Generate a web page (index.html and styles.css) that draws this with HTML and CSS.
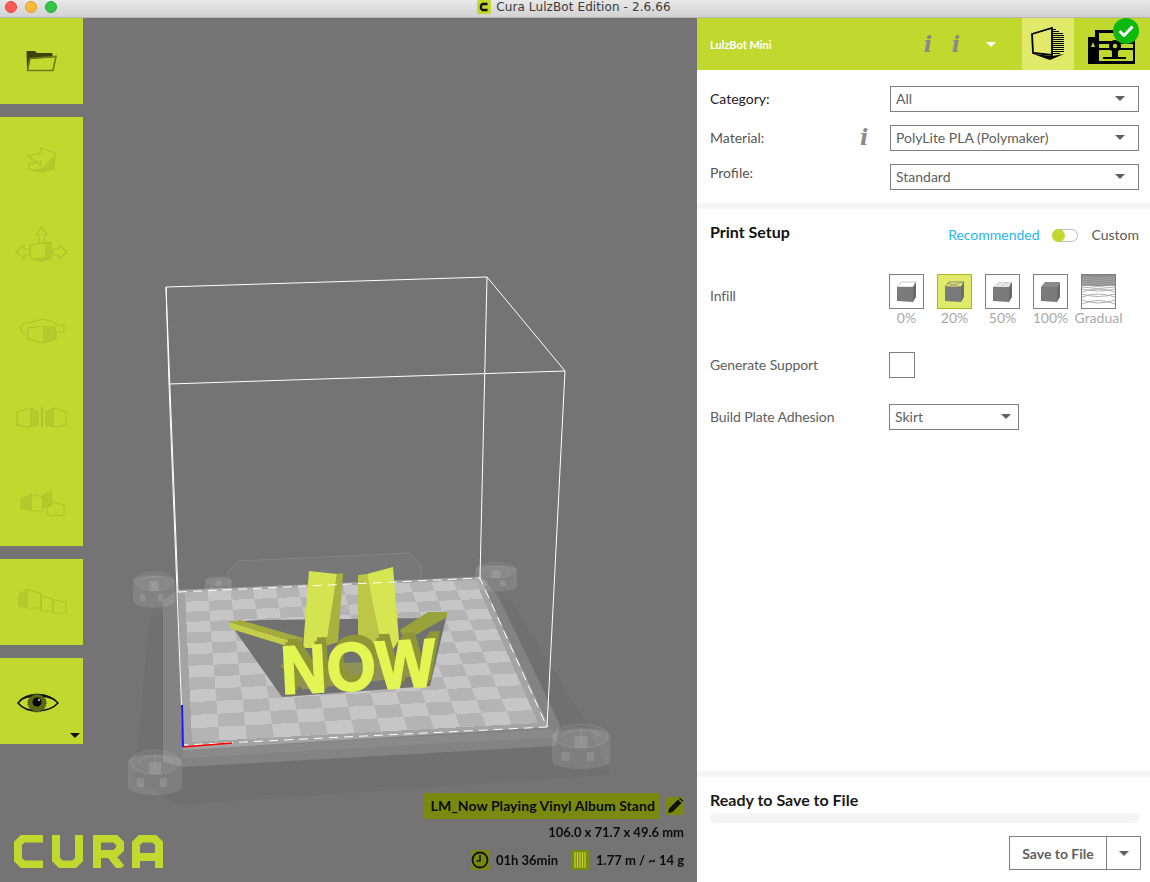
FILE: index.html
```html
<!DOCTYPE html>
<html lang="en">
<head>
<meta charset="utf-8">
<title>Cura LulzBot Edition - 2.6.66</title>
<link rel="stylesheet" href="styles.css">
</head>
<body>
<div class="window">
  <header class="titlebar">
    <div class="lights"><span class="light red"></span><span class="light yellow"></span><span class="light green"></span></div>
    <div class="title"><span class="app-badge"><svg viewBox="0 0 14 14" width="14" height="14"><rect width="14" height="14" rx="2" fill="#c1d82f"/><path d="M10.5 4H5.500L4 5.500V8.500L5.500 10H10.500" fill="none" stroke="#111" stroke-width="2.400"/></svg></span>Cura LulzBot Edition - 2.6.66</div>
  </header>
  <div class="main">
    <section class="viewport">
      <svg class="scene" viewBox="0 0 697 882" width="697" height="882">
        <defs>
          <g id="mount">
            <path d="M0 14C0 4 54 4 54 14V38C54 50 0 50 0 38Z" fill="#fff" fill-opacity=".1"/>
            <ellipse cx="27" cy="14" rx="25" ry="12" fill="#fff" fill-opacity=".05" stroke="#fff" stroke-opacity=".1"/>
            <path d="M10 14C16 6 38 6 44 14M27 6V22" fill="none" stroke="#fff" stroke-opacity=".12"/>
            <path d="M21 14h12v12h-12zM9 30h7v9h-7zM32 30h7v9h-7z" fill="#fff" fill-opacity=".12"/>
          </g>
        </defs>
        <path d="M150 615L510 600L590 730L610 775L180 805L135 780Z" fill="#707070"/>
        <path d="M228 572L238 561L410 553L422 566L420 590L230 598Z" fill="#787878" stroke="#848484"/>
        <path d="M163 600L178 590L482 576L500 600L560 725L556 746L183 767L163 762Z" fill="#838383"/>
        <path d="M183 750L552 729L556 737L183 758Z" fill="#8a8a8a"/>
        <path d="M178 590L480 577L549 727L183 750Z" fill="#a4a4a4"/>
        <use href="#mount" transform="translate(128 748)"/>
        <use href="#mount" transform="translate(552 722) scale(1.080 1)"/>
        <use href="#mount" transform="translate(133 570) scale(.78 .8)"/>
        <use href="#mount" transform="translate(475 561) scale(.78 .65)"/>
        <use href="#mount" transform="translate(205 575) scale(.5 .42)"/>
      </svg>
      <div class="checker"></div>
      <svg class="scene" viewBox="0 0 697 882" width="697" height="882">
        <path d="M229 622L262 620L432 618L447 614L430 686L282 697Z" fill="#717171"/>
        <path d="M303 690L280 665L435 660L425 675L300 690Z" fill="#a9b340" opacity=".5"/>
        <path d="M229 622L240 620L303 638L301 644Z" fill="#a3ab3d"/>
        <path d="M229 622L301 644L300 650L231 629Z" fill="#c3ce48"/>
        <path d="M400 630L428 612L447 612L447 617L405 641Z" fill="#9aa33a"/>
        <path d="M309 571L337 574L326 648L303 648Z" fill="#d4e350"/>
        <path d="M337 574L343 573L338 642L326 646Z" fill="#a9b23e"/>
        <path d="M358 575L367 574L386 650L358 648Z" fill="#bcc748"/>
        <path d="M367 574L393 567L399 640L385 662Z" fill="#d6e552"/>
        <g class="model-text" transform="translate(282 694) rotate(-3)">
          <text class="now-side" x="5" y="-7" textLength="155" lengthAdjust="spacingAndGlyphs">NOW</text>
          <text class="now-side" x="2.500" y="-3.500" textLength="155" lengthAdjust="spacingAndGlyphs">NOW</text>
          <text class="now-front" x="0" y="0" textLength="155" lengthAdjust="spacingAndGlyphs">NOW</text>
        </g>
        <g fill="none" stroke="#fff" stroke-width="1">
          <path d="M166 287L487 277L565 371L169 384ZM166 287L178 592M169 384L183 745M487 277L480 578M565 371L547 727"/>
          <path d="M178 592L480 578L547 727L183 745" stroke-dasharray="9 6"/>
        </g>
        <path d="M182 705L183 747" stroke="#1a1aff" stroke-width="2"/>
        <path d="M183 747L232 743" stroke="#f00" stroke-width="1.500"/>
      </svg>

      <nav class="toolbar">
        <div class="tool-group">
          <div class="tool"><svg viewBox="0 0 31 22" width="31" height="22"><path d="M1 1.500H9L11 3.500H26V7L4 8.500L1.500 20Z" fill="#3b420c" stroke="#3b420c"/><path d="M4 8.500L30 6.500L27 20.500H1.500Z" fill="none" stroke="#6f7c18" stroke-width="1.600"/></svg></div>
        </div>
        <div class="tool-group">
          <div class="tool"><svg class="dim" viewBox="0 0 30 26" width="30" height="26"><path d="M1 9L14 6V1L28 6L27 22L14 24L2 22V17L14 14V19L1 9Z"/><path d="M27 9V22L14 22Z" class="solid"/><path d="M3 23L14 21L26 23L15 26Z" class="solid"/></svg></div>
          <div class="tool"><svg class="dim" viewBox="0 0 53 39" width="53" height="39"><path d="M26.500 1L32 9H29V17H24V9H21Z"/><path d="M1 26L9 19V23H15V29H9V33Z"/><path d="M52 26L44 19V23H38V29H44V33Z"/><path d="M15 19L36 16V32L27 35L15 32Z"/><path d="M30 17L36 16V32L30 34Z" class="solid"/><path d="M16 33L27 31L36 33L26 36Z" class="solid"/></svg></div>
          <div class="tool"><svg class="dim" viewBox="0 0 46 26" width="46" height="26"><path d="M8 17C-3 12 2 5 9 5L24 1L35 4L37 7H45V14H37V21L24 25L9 21V10L24 8L37 10"/><path d="M24 9L37 10V21L24 25Z" class="solid"/></svg></div>
          <div class="tool"><svg class="dim" viewBox="0 0 51 21" width="51" height="21"><path d="M1 5L14 1L22 5V18L12 20L1 18Z"/><path d="M14 2L22 5V18L14 19Z" class="solid"/><path d="M26 0V20" stroke-width="2"/><path d="M30 5L38 1L50 5V18L40 20L30 18Z"/><path d="M30 5L38 2V19L30 18Z" class="solid"/></svg></div>
          <div class="tool"><svg class="dim" viewBox="0 0 46 27" width="46" height="27"><path d="M1 8L12 4V21L1 19Z" class="solid"/><path d="M12 4L24 7V21L12 21Z"/><path d="M23 4L33 1V16L23 19Z" class="solid"/><path d="M28 17L33 12L45 15V25L33 26L28 24Z"/></svg></div>
        </div>
        <div class="tool-group">
          <div class="tool"><svg class="dim" viewBox="0 0 50 27" width="50" height="27"><path d="M1 6L10 1V20L1 19Z" class="solid"/><path d="M10 1L24 6V20L10 20Z"/><path d="M24 8L36 11V23L24 23Z"/><path d="M36 12L49 14V25H36Z"/></svg></div>
        </div>
        <div class="tool-group eye-group">
          <div class="tool"><svg viewBox="0 0 42 22" width="42" height="22"><path d="M1 11C9 1 31 0 41 11C32 21 10 22 1 11Z" fill="none" stroke="#111" stroke-width="1.500"/><path d="M1 10C9 -1 32 -1 41 11C32 3 10 3 1 10Z" fill="#111"/><circle cx="20" cy="11" r="9" fill="#5d6a10" stroke="#222" stroke-dasharray="1 1"/><circle cx="20" cy="10" r="4.500" fill="#050505"/><circle cx="22" cy="8" r="1" fill="#ddd"/></svg></div>
          <span class="eye-caret"></span>
        </div>
      </nav>

      <svg class="logo" role="img" aria-label="Cura" viewBox="0 0 149 33" width="149" height="33">
        <path d="M29 3.500H9L4 8.500V24.500L9 29.500H29M42 0V24.500L47 29.500H60L65 24.500V0M83 33V3.500H101L106 8.500V14L101 19H83M96 19L107 33M122 33V8.500L127 3.500H140L145 8.500V33M122 22H145" fill="none" stroke="#c1d82f" stroke-width="8"/>
      </svg>

      <div class="job-specs">
        <div class="job-name-row">
          <span class="job-name">LM_Now Playing Vinyl Album Stand</span>
          <span class="pencil"><svg viewBox="0 0 18 18" width="18" height="18"><path d="M2 16L3 11.500L12 2.500L15.500 6L6.500 15ZM13 1.500L14 .5L17.500 4L16.500 5Z" fill="#111"/></svg></span>
        </div>
        <div class="job-size">106.0 x 71.7 x 49.6 mm</div>
        <div class="job-time">
          <span class="spec-icon"><svg viewBox="0 0 18 20" width="18" height="20"><circle cx="9" cy="10" r="7.500" fill="none" stroke="#111" stroke-width="1.800"/><path d="M9 5V11H5.500" fill="none" stroke="#111" stroke-width="1.500"/></svg></span>
          <span>01h 36min</span>
          <span class="spec-icon spool"><svg viewBox="0 0 18 20" width="18" height="20"><path d="M4 2V18M6.500 2V18M9 2V18M11.500 2V18M14 2V18" stroke="#c7d531" stroke-width="1.200"/></svg></span>
          <span>1.77 m / ~ 14 g</span>
        </div>
      </div>
    </section>

    <aside class="sidebar">
      <div class="machine-bar">
        <span class="machine-name">LulzBot Mini</span>
        <span class="info-i header-i">i</span>
        <span class="info-i header-i">i</span>
        <span class="white-caret"></span>
        <div class="mode-tab active"><svg viewBox="0 0 36 34" width="36" height="34"><path d="M2 7L22 1V28L3 26Z" fill="none" stroke="#000" stroke-width="1.800"/><path d="M22 2.500H26M22 4.500H29M22 6.500H33M22 8.500H34M22 10.500H34M22 12.500H34M22 14.500H34M22 16.500H34M22 18.500H34M22 20.500H34M22 22.500H34M22 24.500H34M22 26.500H30" stroke="#000" stroke-width="1.100"/><path d="M3 27L22 29L34 27L20 33Z" fill="#000"/></svg></div>
        <div class="mode-tab monitor-tab"><svg class="printer" viewBox="0 0 48 36" width="48" height="36"><path d="M7 1H42V8H47V35H0V8H7Z" fill="#000"/><path d="M11 4H34V12H11ZM11 15H45V19H11ZM11 21H45V32H11Z" fill="#c1d82f"/><path d="M3 18L5 13L7 18Z" fill="#c1d82f"/><circle cx="27" cy="17" r="6" fill="#000"/><circle cx="27" cy="17" r="2.200" fill="#c1d82f"/><path d="M24 21H30V28H24ZM15 28H38V30H15Z" fill="#000"/></svg></div>
        <span class="status-badge"><svg viewBox="0 0 16 12" width="16" height="12"><path d="M1.500 6L6 10.500L14.500 1.500" fill="none" stroke="#fff" stroke-width="3"/></svg></span>
      </div>

      <div class="material-section">
        <div class="field-row">
          <span class="field-label dark">Category:</span>
          <div class="select wide"><span>All</span><i class="caret"></i></div>
        </div>
        <div class="field-row">
          <span class="field-label">Material:</span>
          <span class="info-i material-i">i</span>
          <div class="select wide"><span>PolyLite PLA (Polymaker)</span><i class="caret"></i></div>
        </div>
        <div class="field-row">
          <span class="field-label raised">Profile:</span>
          <div class="select wide"><span>Standard</span><i class="caret"></i></div>
        </div>
      </div>

      <div class="setup-section">
        <div class="setup-head">
          <h2 class="setup-title">Print Setup</h2>
          <div class="mode-switch">
            <span class="recommended">Recommended</span>
            <span class="toggle"><span class="knob"></span></span>
            <span class="custom">Custom</span>
          </div>
        </div>
        <div class="infill-row">
          <span class="setup-label infill-label">Infill</span>
          <div class="infill-options">
            <div class="infill-opt"><span class="infill-box"><svg viewBox="0 0 33 33" width="33" height="33"><path d="M7 12L11 7H26L23 12Z" fill="#fff" stroke="#ccc"/><path d="M7 12H23V27L7 26Z" fill="#7a7a7a"/><path d="M23 12L26 7V22L23 27Z" fill="#6b6b6b"/></svg></span><span class="infill-text">0%</span></div>
            <div class="infill-opt"><span class="infill-box selected"><svg viewBox="0 0 33 33" width="33" height="33"><path d="M7 12L11 7H26L23 12Z" fill="#dfe67c" stroke="#8f8f6a"/><path d="M9 8L23 12M25 7L8 12" stroke="#8f8f6a" stroke-width=".7"/><path d="M7 12H23V27L7 26Z" fill="#7a7a7a"/><path d="M23 12L26 7V22L23 27Z" fill="#6b6b6b"/></svg></span><span class="infill-text">20%</span></div>
            <div class="infill-opt"><span class="infill-box"><svg viewBox="0 0 33 33" width="33" height="33"><path d="M7 12L11 7H26L23 12Z" fill="#ccc"/><path d="M8 10L23 12M10 8L25 10M12 7L7 12M18 7L12 12M24 7L18 12" stroke="#fff" stroke-width=".8"/><path d="M7 12H23V27L7 26Z" fill="#7a7a7a"/><path d="M23 12L26 7V22L23 27Z" fill="#6b6b6b"/></svg></span><span class="infill-text">50%</span></div>
            <div class="infill-opt"><span class="infill-box"><svg viewBox="0 0 33 33" width="33" height="33"><path d="M7 12L11 7H26L23 12Z" fill="#8a8a8a"/><path d="M7 12H23V27L7 26Z" fill="#7a7a7a"/><path d="M23 12L26 7V22L23 27Z" fill="#6b6b6b"/></svg></span><span class="infill-text">100%</span></div>
            <div class="infill-opt"><span class="infill-box"><svg viewBox="0 0 33 33" width="33" height="33"><rect width="33" height="33" fill="#fff"/><rect width="33" height="11" fill="#8d8d8d"/><path d="M0 2Q16 5 33 2M0 4Q16 7 33 4M0 6Q16 9 33 6M0 8Q16 11 33 8M0 10Q16 13 33 10M0 12Q16 15 33 12M0 17Q16 11 33 17M0 14Q16 18 33 14M0 22Q16 16 33 22M0 19Q16 24 33 19M0 29Q16 22 33 29M0 25Q16 31 33 25" fill="none" stroke="#a8a8a8" stroke-width=".9"/></svg></span><span class="infill-text">Gradual</span></div>
          </div>
        </div>
        <div class="support-row">
          <span class="setup-label">Generate Support</span>
          <span class="checkbox"></span>
        </div>
        <div class="adhesion-row">
          <span class="setup-label">Build Plate Adhesion</span>
          <div class="select narrow"><span>Skirt</span><i class="caret"></i></div>
        </div>
      </div>

      <div class="save-section">
        <div class="save-title">Ready to Save to File</div>
        <div class="progress"></div>
        <div class="save-actions">
          <div class="save-btn"><span class="save-label">Save to File</span><span class="save-more"><i class="caret"></i></span></div>
        </div>
      </div>
    </aside>
  </div>
</div>
</body>
</html>
```
FILE: styles.css
```css
* { box-sizing: border-box; }
html, body { margin: 0; padding: 0; background: #fff; }
body { font-family: "Lato", "Open Sans", sans-serif; }

.window { width: 1150px; height: 882px; display: flex; flex-direction: column; overflow: hidden; }

/* title bar */
.titlebar {
  height: 18px; flex: none; position: relative;
  background: linear-gradient(#e8e8e8, #d2d2d2);
  border-bottom: 1px solid #b4b4b4;
  display: flex; align-items: center; justify-content: center;
}
.lights { position: absolute; left: 5px; top: 1px; display: flex; gap: 8px; }
.light { width: 12px; height: 12px; border-radius: 50%; }
.red { background: #fc5b57; border: 1px solid #e2443f; }
.yellow { background: #fdb93b; border: 1px solid #dd9d2c; }
.green { background: #33c748; border: 1px solid #25a938; }
.title {
  font-family: "DejaVu Sans", sans-serif; font-size: 12px; letter-spacing: .1px; color: #3a3a3a;
  display: flex; align-items: center; gap: 5px; margin-left: -2px; margin-top: -3px;
}
.app-badge { display: flex; }

.main { flex: 1; display: flex; min-height: 0; }

/* viewport */
.viewport { width: 697px; flex: none; background: #747474; position: relative; overflow: hidden; }
.scene { position: absolute; left: 0; top: -18px; }
.checker {
  position: absolute; left: 0; top: -18px; width: 1000px; height: 1000px;
  transform-origin: 0 0;
  transform: matrix3d(.302729, .003543, 0, .0000268, -.025012, .026287, 0, -.000166729, 0, 0, 1, 0, 185, 592, 0, 1);
  background: repeating-conic-gradient(#c6c6c6 0 25%, #b4b4b4 0 50%) 0 0 / 153.8px 153.8px;
}
.model-text text { font-family: "Liberation Sans", sans-serif; font-weight: 700; font-size: 68px; }
.now-side { fill: #8f9736; stroke: #8f9736; stroke-width: 1.500px; }
.now-front { fill: #e2f553; stroke: #e2f553; stroke-width: 2px; }

.toolbar { position: relative; width: 83px; display: flex; flex-direction: column; gap: 13px; }
.tool-group { background: #c1d82f; position: relative; }
.tool { height: 85.800px; display: flex; align-items: center; justify-content: center; }
.tool:first-child:last-child { height: 86px; }
.dim { fill: none; stroke: #aec32b; stroke-width: 1.100; }
.dim .solid { fill: #aec32b; fill-opacity: .7; stroke: none; }
.eye-group .tool svg { margin-left: -8px; margin-top: 5px; }
.eye-caret {
  position: absolute; right: 3px; bottom: 6px; width: 0; height: 0;
  border-left: 5px solid transparent; border-right: 5px solid transparent; border-top: 5px solid #111;
}

.logo { position: absolute; left: 14px; bottom: 14px; }

.job-specs {
  position: absolute; right: 13px; bottom: 12px;
  display: flex; flex-direction: column; align-items: flex-end;
  color: #0c0c0c; font-size: 13px; font-weight: 700;
}
.job-name-row { display: flex; align-items: center; gap: 7px; }
.job-name { background: #7a8a10; height: 26px; line-height: 26px; padding: 0 4px 0 8px; font-size: 14px; letter-spacing: .06px; white-space: nowrap; }
.pencil { background: #7a8a10; width: 18px; height: 18px; display: flex; }
.job-size { margin-top: 3px; height: 20px; line-height: 20px; }
.job-time { margin-top: 8px; height: 20px; display: flex; align-items: center; gap: 7px; }
.spec-icon { display: flex; background: #7a8a10; width: 18px; height: 20px; }
.spool { margin-left: 6px; }

/* sidebar */
.sidebar { width: 453px; flex: none; background: #fff; display: flex; flex-direction: column; color: #404040; font-size: 14px; }
.machine-bar { height: 52px; flex: none; background: #c1d82f; position: relative; display: flex; align-items: stretch; padding-left: 13px; }
.machine-name { color: #fff; font-size: 11px; font-weight: 700; align-self: center; width: 204px; }
.info-i { font-family: "DejaVu Serif", serif; font-weight: 700; font-style: italic; font-size: 22px; color: #8a8a8a; line-height: 1; }
.header-i { align-self: center; width: 28px; text-align: center; }
.white-caret {
  align-self: center; margin-left: 16px; margin-right: 26px; width: 0; height: 0;
  border-left: 5px solid transparent; border-right: 5px solid transparent; border-top: 5px solid #fff;
}
.mode-tab { width: 52px; display: flex; align-items: center; justify-content: center; }
.mode-tab.active { background: #e0e96a; }
.monitor-tab { justify-content: flex-start; }
.printer { margin-left: 14px; margin-top: 6px; flex: none; }
.status-badge {
  position: absolute; left: 416px; top: 0; width: 26px; height: 26px; border-radius: 50%;
  background: #0cb90c; display: flex; align-items: center; justify-content: center;
}

.material-section { padding: 16px 11px 13px 13px; display: flex; flex-direction: column; gap: 13px; border-bottom: 6px solid #f5f5f5; height: 139px; flex: none; }
.field-row { display: flex; align-items: center; height: 26px; position: relative; }
.field-label { color: #555; flex: 1; padding-bottom: 2px; }
.field-label.dark { color: #222; }
.field-label.raised { position: relative; top: -4px; }
.material-i { position: absolute; left: 150px; top: 1px; }
.select {
  border: 1px solid #7f7f7f; height: 26px; display: flex; align-items: center; justify-content: space-between;
  padding: 0 13px 2px 5px; color: #606060; font-size: 14px; background: #fff;
}
.select.wide { width: 249px; }
.select.narrow { width: 130px; padding-right: 7px; }
.caret { display: block; width: 0; height: 0; border-left: 5px solid transparent; border-right: 5px solid transparent; border-top: 5px solid #606060; }

.setup-section { flex: 1; padding: 0 11px 0 13px; }
.setup-head { display: flex; justify-content: space-between; align-items: flex-start; height: 65px; }
.setup-title { margin: 13px 0 0; font-size: 16px; line-height: 20px; font-weight: 700; color: #111; }
.mode-switch { margin-top: 16px; display: flex; align-items: center; line-height: 20px; color: #5a5a5a; }
.recommended { color: #27b6ea; letter-spacing: -.02px; }
.toggle { width: 26px; height: 13px; margin: 0 13px; border: 1px solid #bbb; border-radius: 7px; position: relative; background: #fff; display: block; }
.knob { position: absolute; left: -1px; top: -1px; width: 13px; height: 13px; border-radius: 50%; background: #c1d82f; }
.setup-label { color: #606060; width: 179px; flex: none; padding-bottom: 2px; letter-spacing: -.1px; }
.infill-row { display: flex; align-items: flex-start; height: 78px; }
.infill-label { margin-top: 13px; }
.infill-options { display: flex; }
.infill-opt { width: 35px; margin-right: 13px; display: flex; flex-direction: column; align-items: center; }
.infill-box { width: 35px; height: 35px; border: 1px solid #7f7f7f; display: block; background: #fff; }
.infill-box svg { display: block; }
.infill-box.selected { background: #e0e96a; border-color: #a5b820; }
.infill-text { color: #a9a9a9; font-size: 14px; line-height: 18px; white-space: nowrap; }
.support-row { display: flex; align-items: center; height: 26px; margin-bottom: 26px; }
.checkbox { width: 26px; height: 26px; border: 1px solid #7f7f7f; background: #fff; display: block; }
.adhesion-row { display: flex; align-items: center; height: 26px; }

.save-section { flex: none; height: 111px; border-top: 6px solid #f5f5f5; padding: 13px 11px 0 13px; }
.save-title { font-size: 16px; line-height: 20px; font-weight: 700; color: #1a1a1a; }
.progress { height: 10px; margin-top: 3px; background: #f4f4f4; border-radius: 5px; }
.save-actions { display: flex; justify-content: flex-end; margin-top: 13px; margin-right: -2px; }
.save-btn { display: flex; height: 34px; width: 132px; border: 1px solid #7f7f7f; color: #606060; font-size: 14px; font-weight: 700; }
.save-label { width: 97px; border-right: 1px solid #7f7f7f; display: flex; align-items: center; justify-content: center; }
.save-more { flex: 1; display: flex; align-items: center; justify-content: center; }
```
